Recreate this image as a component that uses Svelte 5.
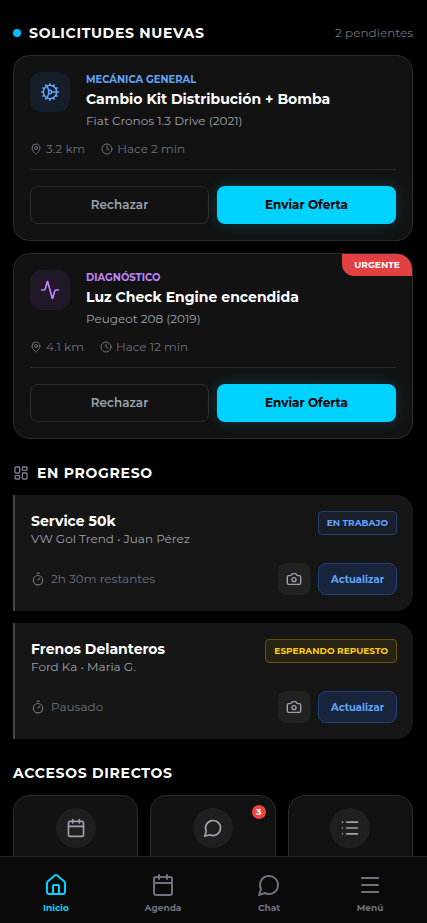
<script>
  let requests = $state([
    {
      category: 'MECÁNICA GENERAL',
      kind: 'mechanic',
      icon: 'cog',
      title: 'Cambio Kit Distribución + Bomba',
      vehicle: 'Fiat Cronos 1.3 Drive (2021)',
      distance: '3.2 km',
      time: 'Hace 2 min',
      urgent: false,
    },
    {
      category: 'DIAGNÓSTICO',
      kind: 'diagnostic',
      icon: 'activity',
      title: 'Luz Check Engine encendida',
      vehicle: 'Peugeot 208 (2019)',
      distance: '4.1 km',
      time: 'Hace 12 min',
      urgent: true,
    },
  ]);

  const jobs = [
    {
      title: 'Service 50k',
      detail: 'VW Gol Trend • Juan Pérez',
      status: 'EN TRABAJO',
      tone: 'working',
      time: '2h 30m restantes',
    },
    {
      title: 'Frenos Delanteros',
      detail: 'Ford Ka • Maria G.',
      status: 'ESPERANDO REPUESTO',
      tone: 'waiting',
      time: 'Pausado',
    },
  ];

  const shortcuts = [
    { icon: 'calendar', label: 'Agenda' },
    { icon: 'chat', label: 'Mensajes', badge: 3 },
    { icon: 'list', label: 'Servicios' },
  ];

  const tabs = [
    { icon: 'home', label: 'Inicio' },
    { icon: 'calendar', label: 'Agenda' },
    { icon: 'chat', label: 'Chat' },
    { icon: 'menu', label: 'Menú' },
  ];

  let active = $state('Inicio');

  const icons = {
    cog: [
      'M12 20a8 8 0 1 0 0-16 8 8 0 0 0 0 16Z',
      'M12 14a2 2 0 1 0 0-4 2 2 0 0 0 0 4Z',
      'M12 2v2M12 22v-2M17 20.66l-1-1.73M11 10.27 7 3.34M20.66 17l-1.73-1M3.34 7l1.73 1',
      'M14 12h8M2 12h2M20.66 7l-1.73 1M3.34 17l1.73-1M17 3.34l-1 1.73M11 13.73l-4 6.93',
    ],
    activity: [
      'M22 12h-2.48a2 2 0 0 0-1.93 1.46l-2.35 8.36a.25.25 0 0 1-.48 0L9.24 2.18a.25.25 0 0 0-.48 0l-2.35 8.36A2 2 0 0 1 4.49 12H2',
    ],
    pin: [
      'M20 10c0 4.993-5.539 10.193-7.399 11.799a1 1 0 0 1-1.202 0C9.539 20.193 4 14.993 4 10a8 8 0 0 1 16 0',
      'M15 10a3 3 0 1 1-6 0 3 3 0 0 1 6 0Z',
    ],
    clock: ['M22 12a10 10 0 1 1-20 0 10 10 0 0 1 20 0Z', 'M12 6v6l4 2'],
    dashboard: [
      'M4 3h5a1 1 0 0 1 1 1v7a1 1 0 0 1-1 1H4a1 1 0 0 1-1-1V4a1 1 0 0 1 1-1Z',
      'M15 3h5a1 1 0 0 1 1 1v3a1 1 0 0 1-1 1h-5a1 1 0 0 1-1-1V4a1 1 0 0 1 1-1Z',
      'M15 12h5a1 1 0 0 1 1 1v7a1 1 0 0 1-1 1h-5a1 1 0 0 1-1-1v-7a1 1 0 0 1 1-1Z',
      'M4 16h5a1 1 0 0 1 1 1v3a1 1 0 0 1-1 1H4a1 1 0 0 1-1-1v-3a1 1 0 0 1 1-1Z',
    ],
    timer: ['M10 2h4M12 14l3-3', 'M20 14a8 8 0 1 1-16 0 8 8 0 0 1 16 0Z'],
    camera: [
      'M14.5 4h-5L7 7H4a2 2 0 0 0-2 2v9a2 2 0 0 0 2 2h16a2 2 0 0 0 2-2V9a2 2 0 0 0-2-2h-3l-2.5-3z',
      'M15 13a3 3 0 1 1-6 0 3 3 0 0 1 6 0Z',
    ],
    calendar: [
      'M8 2v4M16 2v4M3 10h18',
      'M5 4h14a2 2 0 0 1 2 2v14a2 2 0 0 1-2 2H5a2 2 0 0 1-2-2V6a2 2 0 0 1 2-2Z',
    ],
    chat: ['M7.9 20A9 9 0 1 0 4 16.1L2 22Z'],
    list: ['M3 5h.01M3 12h.01M3 19h.01M8 5h13M8 12h13M8 19h13'],
    home: [
      'M15 21v-8a1 1 0 0 0-1-1h-4a1 1 0 0 0-1 1v8',
      'M3 10a2 2 0 0 1 .709-1.528l7-5.999a2 2 0 0 1 2.582 0l7 5.999A2 2 0 0 1 21 10v9a2 2 0 0 1-2 2H5a2 2 0 0 1-2-2z',
    ],
    menu: ['M4 5h16M4 12h16M4 19h16'],
  };
</script>

{#snippet icon(name, size, stroke = 2)}
  <svg width={size} height={size} viewBox="0 0 24 24" stroke-width={stroke}>
    {#each icons[name] as d}
      <path {d} />
    {/each}
  </svg>
{/snippet}

<div class="app">
  <main>
    <section>
      <header class="section-head">
        <span class="dot"></span>
        <h2>SOLICITUDES NUEVAS</h2>
        <span class="pending">{requests.length} pendientes</span>
      </header>

      <div class="stack">
        {#each requests as r}
          <article class="request">
            {#if r.urgent}
              <span class="urgent">URGENTE</span>
            {/if}
            <div class="request-top">
              <div class="request-icon {r.kind}">{@render icon(r.icon, 20, r.kind === 'mechanic' ? 1.8 : 2)}</div>
              <div class="request-info">
                <span class="category {r.kind}">{r.category}</span>
                <h3>{r.title}</h3>
                <p>{r.vehicle}</p>
              </div>
            </div>
            <div class="meta">
              <span>{@render icon('pin', 12)}{r.distance}</span>
              <span>{@render icon('clock', 12)}{r.time}</span>
            </div>
            <div class="actions">
              <button class="reject">Rechazar</button>
              <button class="offer">Enviar Oferta</button>
            </div>
          </article>
        {/each}
      </div>
    </section>

    <section>
      <header class="section-head progress-head">
        {@render icon('dashboard', 16)}
        <h2>EN PROGRESO</h2>
      </header>

      <div class="stack">
        {#each jobs as job}
          <article class="job">
            <div class="job-row">
              <div class="job-info">
                <h3>{job.title}</h3>
                <p>{job.detail}</p>
              </div>
              <span class="status {job.tone}">{job.status}</span>
            </div>
            <div class="job-row job-bottom">
              <span class="job-time">{@render icon('timer', 14)}{job.time}</span>
              <button class="photo" aria-label="Foto">{@render icon('camera', 16)}</button>
              <button class="update">Actualizar</button>
            </div>
          </article>
        {/each}
      </div>
    </section>

    <section>
      <header class="section-head">
        <h2>ACCESOS DIRECTOS</h2>
      </header>
      <div class="shortcuts">
        {#each shortcuts as s}
          <button class="shortcut" aria-label={s.label}>
            <span class="circle">{@render icon(s.icon, 20)}</span>
            {#if s.badge}
              <span class="badge">{s.badge}</span>
            {/if}
          </button>
        {/each}
      </div>
    </section>
  </main>

  <nav>
    {#each tabs as tab}
      <button class="tab" class:active={active === tab.label} onclick={() => (active = tab.label)}>
        {@render icon(tab.icon, 24)}
        <span>{tab.label}</span>
      </button>
    {/each}
  </nav>
</div>

<style>
  :global(body) {
    background: #000;
  }

  .app {
    height: 100vh;
    display: flex;
    flex-direction: column;
    overflow: hidden;
    background: #000;
    color: #fff;
    font-family: Montserrat, Inter, sans-serif;
  }

  main {
    flex: 1;
    min-height: 0;
    overflow: hidden;
    padding: 23px 14px 0 13px;
  }

  h2, h3, p {
    margin: 0;
  }

  button {
    font-family: inherit;
    padding: 0;
    border: 0;
    box-sizing: border-box;
  }

  svg {
    display: block;
    flex: none;
    fill: none;
    stroke: currentColor;
    stroke-linecap: round;
    stroke-linejoin: round;
  }

  section + section {
    margin-top: 24px;
  }

  .section-head {
    display: flex;
    align-items: center;
    gap: 8px;
    height: 20px;
    margin-bottom: 12px;
  }

  .progress-head {
    color: #787f8c;
  }

  h2 {
    font-size: 14px;
    font-weight: 700;
    letter-spacing: 0.7px;
    color: #fff;
    white-space: nowrap;
  }

  .dot {
    width: 8px;
    height: 8px;
    border-radius: 50%;
    background: #00bfff;
  }

  .pending {
    margin-left: auto;
    font-size: 12px;
    line-height: 16px;
    color: #6b7280;
  }

  .stack {
    display: flex;
    flex-direction: column;
    gap: 12px;
  }

  .request {
    position: relative;
    box-sizing: border-box;
    height: 186px;
    padding: 16px;
    border: 1px solid #2a2a2a;
    border-radius: 16px;
    background: #121212;
    overflow: hidden;
  }

  .urgent {
    position: absolute;
    top: 0;
    right: 0;
    width: 70px;
    height: 22px;
    line-height: 22px;
    text-align: center;
    border-bottom-left-radius: 12px;
    background: #e24141;
    font-size: 9px;
    font-weight: 700;
  }

  .request-top {
    display: flex;
    gap: 16px;
  }

  .request-icon {
    display: grid;
    place-items: center;
    width: 40px;
    height: 40px;
    border-radius: 12px;
  }

  .request-icon.mechanic {
    background: #171e2b;
  }

  .request-icon.diagnostic {
    background: #211829;
  }

  .mechanic {
    color: #60a5fa;
  }

  .diagnostic {
    color: #c084fc;
  }

  .request-info {
    display: flex;
    flex-direction: column;
    white-space: nowrap;
  }

  .category {
    font-size: 10px;
    font-weight: 700;
    line-height: 15px;
  }

  h3 {
    font-size: 14px;
    font-weight: 700;
    line-height: 20px;
  }

  .request-info h3 {
    margin: 2px 0;
  }

  .request-info p {
    font-size: 12px;
    line-height: 20px;
    color: #9ca3af;
  }

  .meta {
    display: flex;
    gap: 16px;
    height: 20px;
    margin-top: 8px;
    padding-bottom: 10px;
    border-bottom: 1px solid #262626;
    font-size: 12px;
    line-height: 16px;
    color: #6b7280;
  }

  .meta span {
    display: flex;
    align-items: center;
    gap: 4px;
  }

  .actions {
    display: grid;
    grid-template-columns: 1fr 1fr;
    gap: 8px;
    margin-top: 16px;
  }

  .actions button {
    height: 38px;
    border-radius: 8px;
    font-size: 12px;
    line-height: 16px;
  }

  .actions .reject {
    border: 1px solid #2d2d2d;
    background: transparent;
    color: #9ca3af;
    font-weight: 600;
  }

  .actions .offer {
    background: #00d2ff;
    color: #000;
    font-weight: 700;
    box-shadow: 0 0 15px rgba(0, 210, 255, 0.2);
  }

  .job {
    box-sizing: border-box;
    height: 116px;
    padding: 16px;
    border-left: 2px solid #444;
    border-radius: 0 16px 16px 0;
    background: #161616;
  }

  .job-row {
    display: flex;
    align-items: center;
    gap: 8px;
  }

  .job-row:first-child {
    align-items: flex-start;
    justify-content: space-between;
  }

  .job-info p {
    font-size: 12px;
    line-height: 16px;
    color: #9ca3af;
  }

  .status {
    box-sizing: border-box;
    height: 24px;
    padding: 0 8px;
    border: 1px solid;
    border-radius: 4px;
    font-size: 9px;
    font-weight: 700;
    line-height: 22px;
  }

  .status.working {
    border-color: #23406d;
    background: #191f2a;
    color: #60a5fa;
  }

  .status.waiting {
    border-color: #66520f;
    background: #292313;
    color: #facc15;
  }

  .job-bottom {
    margin-top: 16px;
  }

  .job-time {
    display: flex;
    align-items: center;
    gap: 6px;
    margin-right: auto;
    font-size: 12px;
    line-height: 16px;
    color: #6b7280;
  }

  .photo {
    display: grid;
    place-items: center;
    width: 32px;
    height: 32px;
    border-radius: 8px;
    background: #222;
    color: #9ca3af;
  }

  .update {
    width: 79px;
    height: 32px;
    border: 1px solid #21427b;
    border-radius: 8px;
    background: #18243c;
    color: #60a5fa;
    font-size: 10px;
    font-weight: 700;
  }

  .shortcuts {
    display: grid;
    grid-template-columns: repeat(3, 1fr);
    gap: 12px;
  }

  .shortcut {
    position: relative;
    height: 104px;
    padding-top: 12px;
    display: flex;
    justify-content: center;
    align-items: flex-start;
    border: 1px solid #2a2a2a;
    border-radius: 16px;
    background: #121212;
  }

  .circle {
    display: grid;
    place-items: center;
    width: 40px;
    height: 40px;
    border-radius: 50%;
    background: #1f1f1f;
    color: #9ca3af;
  }

  .badge {
    position: absolute;
    top: 9px;
    right: 9px;
    width: 14px;
    height: 14px;
    border-radius: 50%;
    background: #ef4444;
    color: #fff;
    font-size: 9px;
    font-weight: 700;
    line-height: 14px;
    text-align: center;
  }

  nav {
    box-sizing: border-box;
    height: 67px;
    flex: none;
    display: grid;
    grid-template-columns: 112px 102px 110px 92px;
    border-top: 1px solid #222;
    background: #0a0a0a;
  }

  .tab {
    display: flex;
    flex-direction: column;
    align-items: center;
    gap: 4px;
    padding-top: 16px;
    background: none;
    color: #6b7280;
    font-size: 9px;
    font-weight: 700;
    line-height: 14px;
  }

  .tab.active {
    color: #00d2ff;
  }
</style>
